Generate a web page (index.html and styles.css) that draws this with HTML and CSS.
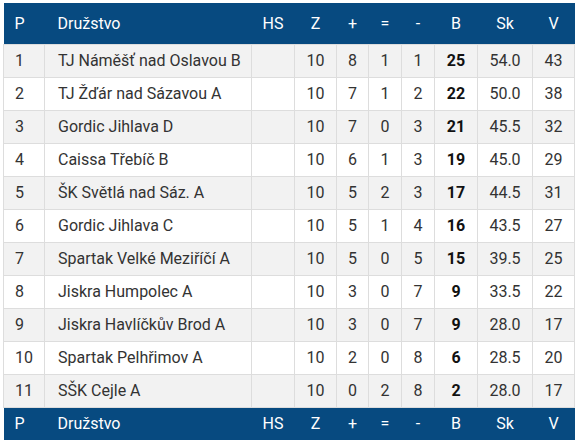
FILE: index.html
```html
<!DOCTYPE html>
<html lang="cs">
<head>
<meta charset="utf-8">
<title>Tabulka</title>
<link rel="stylesheet" href="styles.css">
</head>
<body>
<table class="standings">
  <colgroup>
    <col class="w-p"><col class="w-name"><col class="w-hs"><col class="w-z"><col class="w-w"><col class="w-d"><col class="w-l"><col class="w-b"><col class="w-sk"><col class="w-v">
  </colgroup>
  <thead>
    <tr class="head">
      <th class="c-p">P</th><th class="c-name">Družstvo</th><th>HS</th><th>Z</th><th>+</th><th>=</th><th>-</th><th>B</th><th>Sk</th><th>V</th>
    </tr>
  </thead>
  <tbody>
    <tr><td class="c-p">1</td><td class="c-name">TJ Náměšť nad Oslavou B</td><td></td><td>10</td><td>8</td><td>1</td><td>1</td><td class="pts">25</td><td>54.0</td><td>43</td></tr>
    <tr><td class="c-p">2</td><td class="c-name">TJ Žďár nad Sázavou A</td><td></td><td>10</td><td>7</td><td>1</td><td>2</td><td class="pts">22</td><td>50.0</td><td>38</td></tr>
    <tr><td class="c-p">3</td><td class="c-name">Gordic Jihlava D</td><td></td><td>10</td><td>7</td><td>0</td><td>3</td><td class="pts">21</td><td>45.5</td><td>32</td></tr>
    <tr><td class="c-p">4</td><td class="c-name">Caissa Třebíč B</td><td></td><td>10</td><td>6</td><td>1</td><td>3</td><td class="pts">19</td><td>45.0</td><td>29</td></tr>
    <tr><td class="c-p">5</td><td class="c-name">ŠK Světlá nad Sáz. A</td><td></td><td>10</td><td>5</td><td>2</td><td>3</td><td class="pts">17</td><td>44.5</td><td>31</td></tr>
    <tr><td class="c-p">6</td><td class="c-name">Gordic Jihlava C</td><td></td><td>10</td><td>5</td><td>1</td><td>4</td><td class="pts">16</td><td>43.5</td><td>27</td></tr>
    <tr><td class="c-p">7</td><td class="c-name">Spartak Velké Meziříčí A</td><td></td><td>10</td><td>5</td><td>0</td><td>5</td><td class="pts">15</td><td>39.5</td><td>25</td></tr>
    <tr><td class="c-p">8</td><td class="c-name">Jiskra Humpolec A</td><td></td><td>10</td><td>3</td><td>0</td><td>7</td><td class="pts">9</td><td>33.5</td><td>22</td></tr>
    <tr><td class="c-p">9</td><td class="c-name">Jiskra Havlíčkův Brod A</td><td></td><td>10</td><td>3</td><td>0</td><td>7</td><td class="pts">9</td><td>28.0</td><td>17</td></tr>
    <tr><td class="c-p">10</td><td class="c-name">Spartak Pelhřimov A</td><td></td><td>10</td><td>2</td><td>0</td><td>8</td><td class="pts">6</td><td>28.5</td><td>20</td></tr>
    <tr><td class="c-p">11</td><td class="c-name">SŠK Cejle A</td><td></td><td>10</td><td>0</td><td>2</td><td>8</td><td class="pts">2</td><td>28.0</td><td>17</td></tr>
  </tbody>
  <tfoot>
    <tr class="foot">
      <th class="c-p">P</th><th class="c-name">Družstvo</th><th>HS</th><th>Z</th><th>+</th><th>=</th><th>-</th><th>B</th><th>Sk</th><th>V</th>
    </tr>
  </tfoot>
</table>
</body>
</html>
```

FILE: styles.css
```css
html, body {
  margin: 0;
  padding: 0;
  background: #ffffff;
}

body {
  padding: 3px 0 0 3px;
  font-family: Roboto, "Noto Sans", sans-serif;
  font-size: 16px;
  color: #333333;
}

.standings {
  border-collapse: collapse;
  table-layout: fixed;
  width: 571px;
}

.w-p { width: 41px; }
.w-name { width: 207px; }
.w-hs { width: 43px; }
.w-z { width: 42px; }
.w-w { width: 32px; }
.w-d { width: 33px; }
.w-l { width: 33px; }
.w-b { width: 43px; }
.w-sk { width: 55px; }
.w-v { width: 42px; }

.standings th,
.standings td {
  box-sizing: border-box;
  padding: 0;
  text-align: center;
  font-weight: 400;
  white-space: nowrap;
}

.standings th {
  background: #074a80;
  color: #ffffff;
  border: none;
}

.head th {
  height: 41px;
}

.foot th {
  height: 33px;
}

.standings td {
  height: 33px;
  border: 1px solid #dddddd;
}

.standings tbody tr:nth-child(odd) td {
  background: #f2f2f2;
}

.standings tbody tr:nth-child(even) td {
  background: #ffffff;
}

.standings .c-p {
  text-align: left;
  padding-left: 11px;
}

.standings .c-name {
  text-align: left;
  padding-left: 13px;
}

.standings td.pts {
  font-weight: 700;
  color: #111111;
}
```
